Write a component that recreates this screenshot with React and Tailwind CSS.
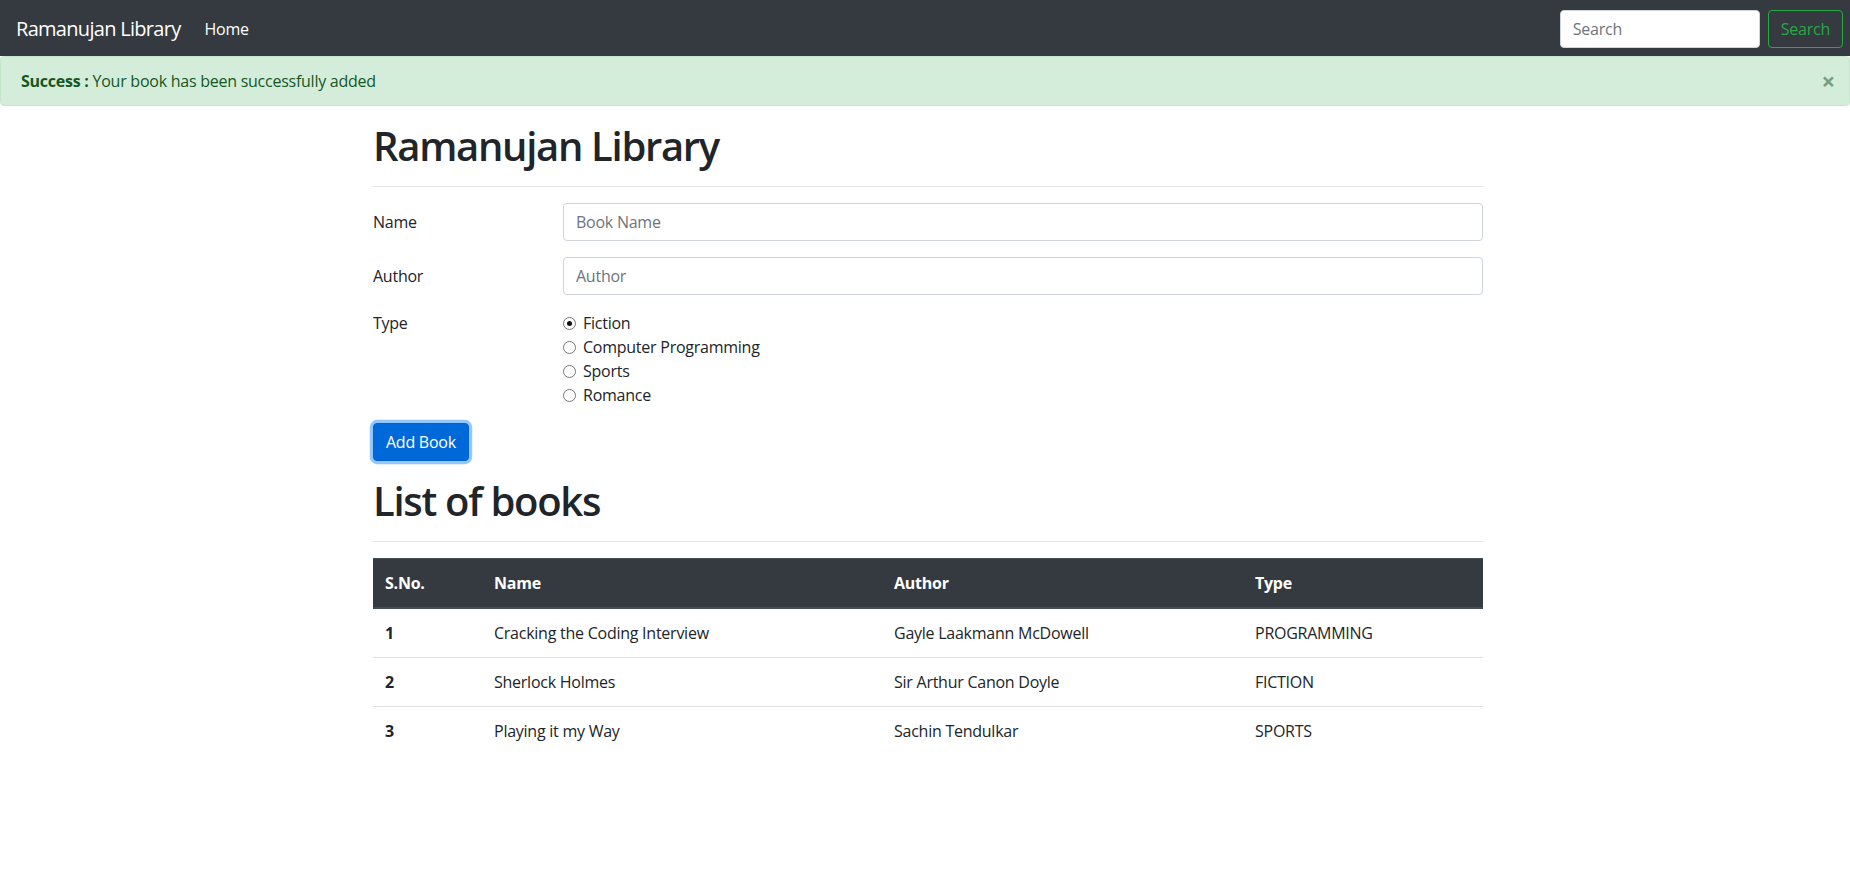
import React from "react";

const books = [
  { id: 1, name: "Cracking the Coding Interview", author: "Gayle Laakmann McDowell", type: "PROGRAMMING" },
  { id: 2, name: "Sherlock Holmes", author: "Sir Arthur Canon Doyle", type: "FICTION" },
  { id: 3, name: "Playing it my Way", author: "Sachin Tendulkar", type: "SPORTS" },
];

const types = ["Fiction", "Computer Programming", "Sports", "Romance"];

function Radio({ checked }) {
  return (
    <span className="mr-[7px] flex h-[13px] w-[13px] shrink-0 items-center justify-center rounded-full border border-[#767676] bg-white">
      {checked && <span className="h-[5px] w-[5px] rounded-full bg-[#111]" />}
    </span>
  );
}

export default function App() {
  return (
    <div className="min-h-[879px] bg-white text-[16px] leading-6 tracking-[-0.25px] text-[#212529] font-['Open_Sans',sans-serif]">
      {/* Navbar */}
      <nav className="flex h-[56px] items-center bg-[#343a40] pl-4 pr-[7px] pt-[1px]">
        <span className="mr-4 text-[20px] leading-[30px] tracking-[-0.7px] text-white">Ramanujan Library</span>
        <span className="px-2 text-white">Home</span>
        <div className="ml-auto flex items-center">
          <input
            type="text"
            placeholder="Search"
            className="mr-2 h-[38px] w-[200px] rounded border border-[#ced4da] bg-white px-3 text-[16px] text-[#495057] outline-none placeholder:text-[#6c757d]"
          />
          <button className="h-[38px] rounded border border-[#28a745] px-3 text-[16px] text-[#28a745]">
            Search
          </button>
        </div>
      </nav>

      {/* Alert */}
      <div className="relative mb-4 rounded border border-[#c3e6cb] bg-[#d4edda] px-5 py-3 text-[#155724]">
        <strong className="font-bold">Success :</strong> Your book has been successfully added
        <button className="absolute right-[14px] top-1/2 -translate-y-1/2 text-[24px] font-bold leading-none text-[#155724] opacity-50">
          ×
        </button>
      </div>

      {/* Container */}
      <div className="pl-[6px]">
        <div className="mx-auto w-[1110px]">
          <h1 className="mb-2 text-[40px] font-semibold leading-[48px] tracking-[-1.3px]">Ramanujan Library</h1>
          <hr className="my-4 border-t border-[rgba(0,0,0,0.1)]" />

          <form onSubmit={(e) => e.preventDefault()}>
            <div className="mb-4 flex">
              <label className="w-[190px] shrink-0 pt-[7px] pb-[7px]">Name</label>
              <input
                type="text"
                placeholder="Book Name"
                className="h-[38px] flex-1 rounded border border-[#ced4da] px-3 text-[16px] outline-none placeholder:text-[#6c757d]"
              />
            </div>
            <div className="mb-4 flex">
              <label className="w-[190px] shrink-0 pt-[7px] pb-[7px]">Author</label>
              <input
                type="text"
                placeholder="Author"
                className="h-[38px] flex-1 rounded border border-[#ced4da] px-3 text-[16px] outline-none placeholder:text-[#6c757d]"
              />
            </div>
            <div className="mb-4 flex">
              <div className="w-[190px] shrink-0">Type</div>
              <div className="flex flex-col">
                {types.map((t, i) => (
                  <label key={t} className="flex h-6 items-center">
                    <Radio checked={i === 0} />
                    <span>{t}</span>
                  </label>
                ))}
              </div>
            </div>
            <button className="h-[38px] rounded border border-[#0062cc] bg-[#0069d9] px-3 text-[16px] text-white shadow-[0_0_0_3.2px_rgba(38,143,255,0.5)]">
              Add Book
            </button>
          </form>

          <h1 className="mt-4 mb-2 text-[40px] font-semibold leading-[48px] tracking-[-1.3px]">List of books</h1>
          <hr className="my-4 border-t border-[rgba(0,0,0,0.1)]" />

          <table className="w-full border-collapse text-left">
            <thead>
              <tr className="bg-[#343a40] text-white">
                <th className="w-[109px] border-b-2 border-t border-[#454d55] px-3 py-3 font-bold">S.No.</th>
                <th className="w-[400px] border-b-2 border-t border-[#454d55] px-3 py-3 font-bold">Name</th>
                <th className="w-[361px] border-b-2 border-t border-[#454d55] px-3 py-3 font-bold">Author</th>
                <th className="w-[240px] border-b-2 border-t border-[#454d55] px-3 py-3 font-bold">Type</th>
              </tr>
            </thead>
            <tbody>
              {books.map((b) => (
                <tr key={b.id}>
                  <th className="border-t border-[#dee2e6] px-3 py-3 font-bold">{b.id}</th>
                  <td className="border-t border-[#dee2e6] px-3 py-3">{b.name}</td>
                  <td className="border-t border-[#dee2e6] px-3 py-3">{b.author}</td>
                  <td className="border-t border-[#dee2e6] px-3 py-3">{b.type}</td>
                </tr>
              ))}
            </tbody>
          </table>
        </div>
      </div>
    </div>
  );
}
